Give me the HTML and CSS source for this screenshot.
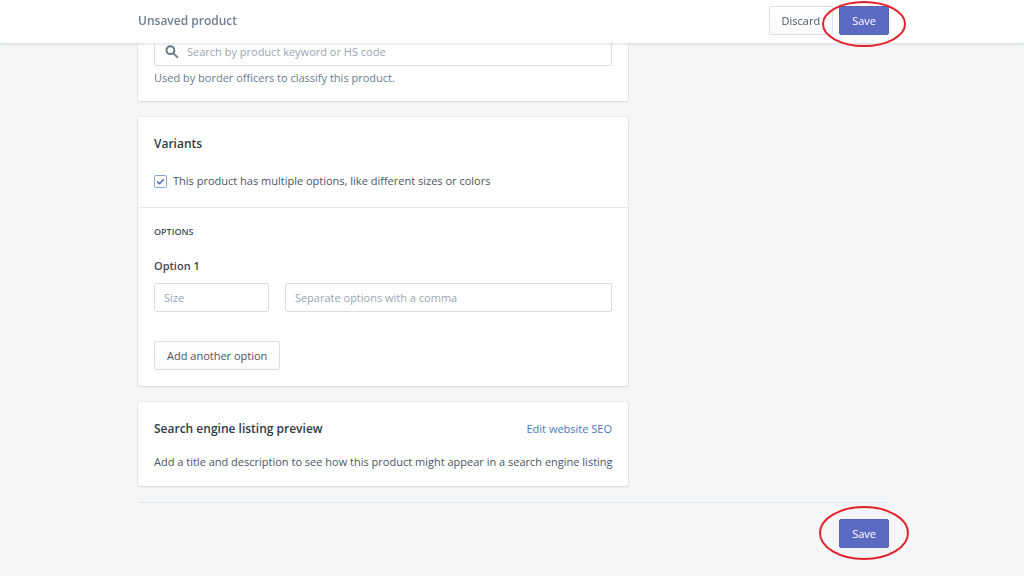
FILE: index.html
```html
<!DOCTYPE html>
<html lang="en">
<head>
<meta charset="utf-8">
<meta name="viewport" content="width=device-width, initial-scale=1">
<title>Unsaved product</title>
<link rel="stylesheet" href="styles.css">
</head>
<body>
<header class="topbar">
  <div class="frame topbar-inner">
    <h1 class="topbar-title">Unsaved product</h1>
    <div class="actions">
      <button type="button" class="btn">Discard</button>
      <div class="marked">
        <button type="button" class="btn btn-primary">Save</button>
        <svg class="ring ring-top" viewBox="0 0 86 48" aria-hidden="true"><ellipse cx="43" cy="24" rx="41" ry="22"/></svg>
      </div>
    </div>
  </div>
</header>
<main class="frame page">
  <div class="columns">
    <div class="cards">
      <section class="card">
        <div class="section section-customs">
          <div class="search">
            <svg class="search-icon" viewBox="0 0 14 14" aria-hidden="true"><circle cx="5.4" cy="5.2" r="3.9"/><path d="M8.2 8.1 12.8 12.6"/></svg>
            <input class="field search-field" type="text" aria-label="HS code" aria-describedby="hs-help" placeholder="Search by product keyword or HS code">
          </div>
          <p class="help" id="hs-help">Used by border officers to classify this product.</p>
        </div>
      </section>
      <section class="card">
        <div class="section section-variants">
          <h2 class="heading">Variants</h2>
          <label class="choice"><input class="checkbox" type="checkbox" checked>This product has multiple options, like different sizes or colors</label>
        </div>
        <div class="section section-options">
          <h3 class="subheading">Options</h3>
          <h4 class="option-title" id="option-1">Option 1</h4>
          <div class="option-row">
            <input class="field" type="text" aria-labelledby="option-1" placeholder="Size">
            <input class="field" type="text" aria-label="Option 1 values" placeholder="Separate options with a comma">
          </div>
          <button type="button" class="btn">Add another option</button>
        </div>
      </section>
      <section class="card">
        <div class="section section-seo">
          <div class="card-head">
            <h2 class="heading">Search engine listing preview</h2>
            <a class="link" href="#seo">Edit website SEO</a>
          </div>
          <p class="text">Add a title and description to see how this product might appear in a search engine listing</p>
        </div>
      </section>
    </div>
  </div>
  <footer class="page-actions">
    <div class="marked">
      <button type="button" class="btn btn-primary">Save</button>
      <svg class="ring ring-bottom" viewBox="0 0 92 56" aria-hidden="true"><ellipse cx="46" cy="28" rx="44" ry="26"/></svg>
    </div>
  </footer>
</main>
</body>
</html>
```
FILE: styles.css
```css
* {
  box-sizing: border-box;
}

body {
  margin: 0;
  padding-left: 3px;
  background: #f4f6f8;
  color: #4b5563;
  font: 11px/16px "Open Sans", "Noto Sans", sans-serif;
}

h1, h2, h3, h4, p {
  margin: 0;
}

.frame {
  width: calc(100% - 32px);
  max-width: 751px;
  margin: 0 auto;
}

.topbar {
  position: fixed;
  top: 0;
  left: 0;
  right: 0;
  z-index: 2;
  padding-left: 3px;
  background: #fff;
  box-shadow: 0 1px 3px rgba(60, 70, 80, 0.18);
}

.topbar-inner {
  display: flex;
  align-items: center;
  justify-content: space-between;
  padding: 6px 0 8px;
}

.topbar-title {
  color: #6f7f90;
  font-size: 12px;
  font-weight: 600;
}

.actions {
  display: flex;
  gap: 6px;
}

.marked {
  position: relative;
}

.ring {
  position: absolute;
  fill: none;
  stroke: #e3232b;
  stroke-width: 2;
  pointer-events: none;
}

.ring-top {
  width: 86px;
  height: 48px;
  top: -6px;
  left: -18px;
}

.ring-bottom {
  width: 92px;
  height: 56px;
  top: -14px;
  left: -21px;
}

.btn {
  display: block;
  height: 29px;
  padding: 0 12px;
  border: 1px solid #d9dee4;
  border-radius: 2px;
  background: linear-gradient(#fff, #f9fafb);
  color: #4b5665;
  font: inherit;
}

.btn-primary {
  border-color: #5765bd;
  background: #5c6ac4;
  color: #fff;
}

.page {
  padding-top: 21px;
}

.columns {
  display: grid;
  grid-template-columns: 2fr 1fr;
  gap: 16px;
}

.cards {
  display: flex;
  flex-direction: column;
  gap: 16px;
}

.card {
  border-radius: 2px;
  background: #fff;
  box-shadow: 0 0 0 1px rgba(63, 80, 105, 0.06), 0 1px 2px rgba(63, 80, 105, 0.12);
}

.section {
  padding: 16px;
}

.section-customs {
  padding-bottom: 15px;
}

.search {
  position: relative;
}

.search-icon {
  position: absolute;
  top: 8px;
  left: 11px;
  width: 14px;
  height: 14px;
  fill: none;
  stroke: #6b7989;
  stroke-width: 2;
}

.field {
  display: block;
  width: 100%;
  min-width: 0;
  height: 29px;
  padding: 0 9px;
  border: 1px solid #d9dee3;
  border-radius: 2px;
  background: #fff;
  color: #4b5563;
  font: inherit;
}

.field::placeholder {
  color: #9aa6b2;
  opacity: 1;
}

.search-field {
  padding-left: 32px;
}

.help {
  padding-top: 4px;
  color: #6b7b8a;
}

.heading {
  color: #303a48;
  font-size: 12px;
  font-weight: 600;
}

.section-variants {
  padding: 19px 16px 18px;
}

.choice {
  display: flex;
  align-items: center;
  gap: 6px;
  padding-top: 21px;
}

.checkbox {
  appearance: none;
  width: 13px;
  height: 13px;
  margin: 0;
  border: 1px solid #8aa9d8;
  border-radius: 2px;
  background: #fff url("data:image/svg+xml,%3Csvg xmlns='http://www.w3.org/2000/svg' viewBox='0 0 11 11'%3E%3Cpath d='M2.2 5.6 4.5 7.8 8.8 3.3' fill='none' stroke='%234865bd' stroke-width='1.5'/%3E%3C/svg%3E") center / 11px no-repeat;
}

.section-options {
  border-top: 1px solid #e6e9ed;
}

.subheading {
  color: #465160;
  font-size: 9px;
  font-weight: 600;
  text-transform: uppercase;
}

.option-title {
  padding: 18px 0 9px;
  color: #3c4655;
  font-size: 11px;
  font-weight: 600;
}

.option-row {
  display: grid;
  grid-template-columns: minmax(0, 26fr) minmax(0, 74fr);
  gap: 16px;
  padding-bottom: 29px;
}

.section-seo {
  padding: 19px 0 16px 16px;
}

.card-head {
  display: flex;
  justify-content: space-between;
  padding-right: 16px;
}

.link {
  color: #4a79b8;
  text-decoration: none;
}

.text {
  padding: 17px 8px 0 0;
}

.page-actions {
  display: flex;
  justify-content: flex-end;
  margin-top: 16px;
  padding: 16px 0 28px;
  border-top: 1px solid #e3e8ec;
}
```
